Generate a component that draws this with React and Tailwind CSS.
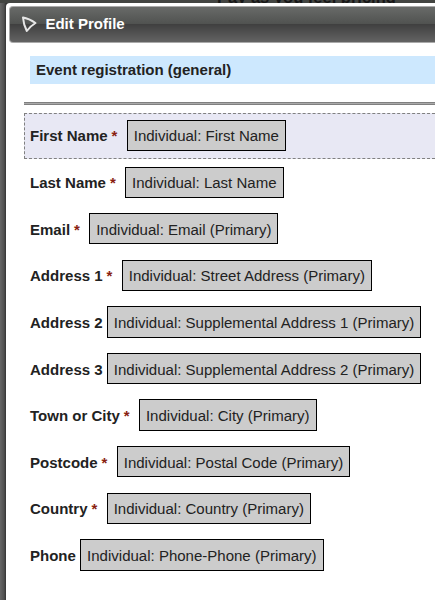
const fields = [
  ['First Name', true, 'First Name'],
  ['Last Name', true, 'Last Name'],
  ['Email', true, 'Email (Primary)'],
  ['Address 1', true, 'Street Address (Primary)'],
  ['Address 2', false, 'Supplemental Address 1 (Primary)'],
  ['Address 3', false, 'Supplemental Address 2 (Primary)'],
  ['Town or City', true, 'City (Primary)'],
  ['Postcode', true, 'Postal Code (Primary)'],
  ['Country', true, 'Country (Primary)'],
  ['Phone', false, 'Phone-Phone (Primary)'],
];

function Field({ label, required, value, active }) {
  return (
    <div
      className={`flex items-center border border-r-0 pl-[5px] whitespace-nowrap ${
        active ? 'mb-[0.6px] h-[46px] border-dashed border-[#808080] bg-[#e8e8f4]' : 'h-[46.6px] border-transparent'
      }`}
    >
      <span className="pt-[0.6px] font-bold">{label}</span>
      {required && <span className="ml-1 pt-[0.6px] font-bold text-[#8a1f11]">*</span>}
      <span
        className={`-mt-[1.4px] flex h-[31.4px] items-center border border-black bg-[#cccccc] px-1.5 pt-[2px] ${
          required ? 'ml-[9.3px]' : 'ml-[4.2px]'
        }`}
      >
        Individual: {value}
      </span>
    </div>
  );
}

export default function App() {
  return (
    <div className="relative h-[600px] w-[435px] overflow-hidden bg-[linear-gradient(to_right,#666_0,#505050_4px,#333_6px)] pt-[3px] pl-1.5 font-['Liberation_Sans',Arial,sans-serif] text-[15.02px] leading-[18px] text-[#222]">
      <div className="absolute top-0 left-0 h-[3px] w-full bg-[#434542]">
        <span className="absolute -top-[11px] left-[217px] text-[16.5px] leading-[16px] font-bold whitespace-nowrap text-[#171717]">
          Pay as you feel pricing
        </span>
      </div>
      <div className="relative h-[597px] w-[429px] rounded-tl-[4px] bg-white pt-[3px] pl-[3px]">
        <header className="flex h-[37px] items-center rounded-l-[4px] border border-r-0 border-[#aaa] bg-[linear-gradient(#686a68_0%,#505250_49%,#404040_50%,#636363_100%)] pl-[11px] font-bold text-white">
          <svg className="-mt-[2px] h-5 w-[17px]" viewBox="0 0 17 20" fill="none" stroke="#e6e6e6" strokeWidth="2" strokeLinejoin="round">
            <path d="M2 3.500Q8 4.500 14.500 9Q9.500 12 5.800 17Q2.500 10.500 2 3.500Z" />
          </svg>
          <span className="-mt-px ml-[7.4px]">Edit Profile</span>
        </header>
        <main className="pt-[13px] pl-[15px]">
          <h1 className="ml-1.5 flex h-7 items-center bg-[#cde8fe] pl-1.5 font-bold">Event registration (general)</h1>
          <div className="mt-[18px] mb-2 h-[3px] border-y border-[#808080] bg-[#aaa]" />
          {fields.map(([label, required, value], i) => (
            <Field key={label} label={label} required={required} value={value} active={i === 0} />
          ))}
        </main>
      </div>
    </div>
  );
}
